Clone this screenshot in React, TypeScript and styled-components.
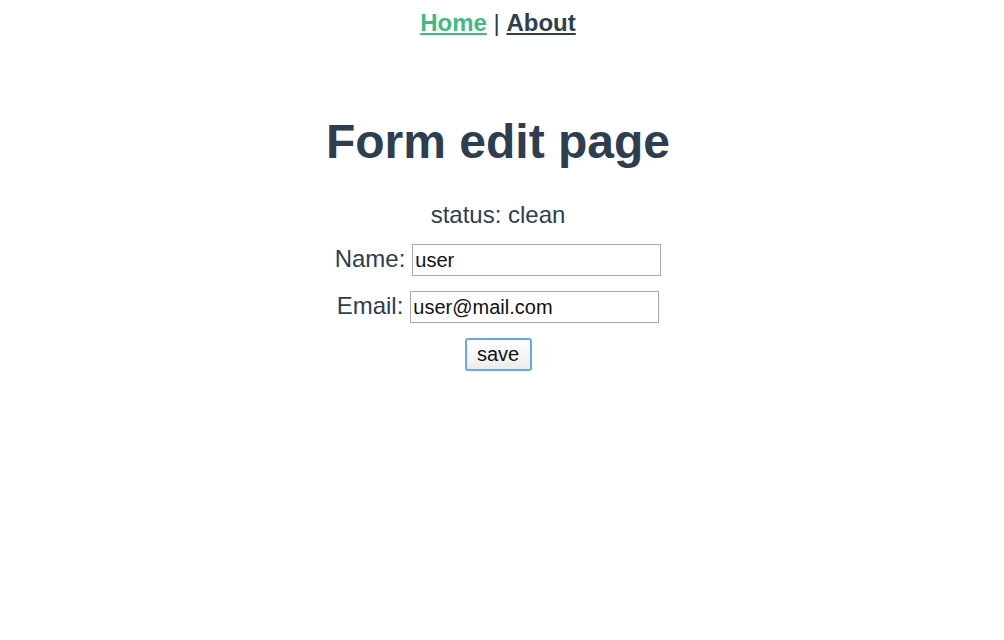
import React, { useState } from "react";
import styled, { createGlobalStyle } from "styled-components";

const Global = createGlobalStyle`
  html, body { background: #fff; }
  body { margin: 8px; }
`;

const AppRoot = styled.div`
  font-family: "Liberation Sans", Arial, Helvetica, sans-serif;
  font-size: 24px;
  color: #2c3e50;
  text-align: center;
  padding-right: 8px;
  -webkit-font-smoothing: antialiased;
`;

const Nav = styled.nav`
  line-height: normal;
  padding-top: 1px;
  margin-bottom: 77px;
`;

const NavLink = styled.a<{ $active?: boolean }>`
  font-weight: bold;
  color: ${(p) => (p.$active ? "#42b983" : "#2c3e50")};
  text-decoration: underline;
  cursor: pointer;
`;

const Title = styled.h1`
  font-size: 48px;
  font-weight: bold;
  margin: 32px 0;
  line-height: normal;
`;

const Status = styled.div`
  line-height: normal;
`;

const Row = styled.div`
  display: flex;
  justify-content: center;
  align-items: baseline;
  gap: 7px;
  margin-top: 15px;
`;

const Label = styled.label`
  line-height: normal;
`;

const Input = styled.input`
  box-sizing: border-box;
  width: 249px;
  height: 32px;
  border: 1px solid #a9a9a9;
  padding: 1px 2px;
  font-family: "Liberation Sans", Arial, sans-serif;
  font-size: 20px;
  color: #111;
  background: #fff;
  outline: none;
`;

const SaveButton = styled.button`
  box-sizing: border-box;
  width: 67px;
  height: 33px;
  border: 2px solid #6aa6ea;
  border-radius: 3px;
  background: linear-gradient(#ffffff, #ececec);
  font-family: "Liberation Sans", Arial, sans-serif;
  font-size: 20px;
  color: #111;
  padding: 0;
`;

export default function App() {
  const [name, setName] = useState("user");
  const [email, setEmail] = useState("user@mail.com");
  return (
    <AppRoot>
      <Global />
      <Nav>
        <NavLink $active>Home</NavLink> | <NavLink>About</NavLink>
      </Nav>
      <Title>Form edit page</Title>
      <Status>status: clean</Status>
      <Row>
        <Label>Name:</Label>
        <Input value={name} onChange={(e) => setName(e.target.value)} />
      </Row>
      <Row>
        <Label>Email:</Label>
        <Input value={email} onChange={(e) => setEmail(e.target.value)} />
      </Row>
      <Row>
        <SaveButton>save</SaveButton>
      </Row>
    </AppRoot>
  );
}
